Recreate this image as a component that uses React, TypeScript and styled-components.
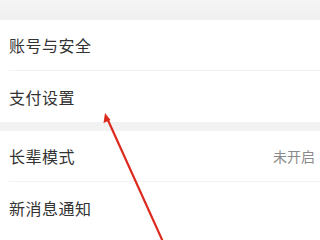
import styled, { createGlobalStyle } from "styled-components";

const GlobalStyle = createGlobalStyle`
  html, body {
    margin: 0;
    padding: 0;
    background: #f2f2f2;
  }
  body {
    font-family: "Noto Sans CJK SC", "Noto Sans", sans-serif;
  }
`;

interface Item {
  label: string;
  value?: string;
}

const groups: Item[][] = [
  [{ label: "账号与安全" }, { label: "支付设置" }],
  [{ label: "长辈模式", value: "未开启" }, { label: "新消息通知" }],
];

export default function App() {
  return (
    <Screen>
      <GlobalStyle />
      <TopBand />
      {groups.map((group, gi) => (
        <Group key={gi} $first={gi === 0} $open={gi === groups.length - 1}>
          {group.map((item) => (
            <Row key={item.label}>
              <Label>{item.label}</Label>
              {item.value && <Value>{item.value}</Value>}
            </Row>
          ))}
        </Group>
      ))}
      <Arrow viewBox="0 0 320 240" width="320" height="240">
        <line x1="164" y1="244" x2="107" y2="118" stroke="#dc2a1e" strokeWidth="2.2" strokeLinecap="round" />
        <polygon points="105,113 103.5,123 110.5,120" fill="#dc2a1e" />
      </Arrow>
    </Screen>
  );
}

const Screen = styled.div`
  position: relative;
  width: 320px;
  height: 240px;
  overflow: hidden;
  background: #f2f2f2;
`;

const TopBand = styled.div`
  height: 20px;
  background: linear-gradient(#f4f4f4, #f0f0f0);
`;

// the last group runs on below the window, so it stays white to the bottom
const Group = styled.div<{ $first: boolean; $open: boolean }>`
  background: #ffffff;
  margin-top: ${(p) => (p.$first ? "0" : "9px")};
  padding-bottom: ${(p) => (p.$open ? "40px" : "0")};
  display: flex;
  flex-direction: column;
`;

const Row = styled.div`
  height: 51px;
  box-sizing: border-box;
  margin-left: 9px;
  padding-right: 5px;
  display: flex;
  align-items: center;
  justify-content: space-between;
  border-bottom: 1px solid #f2f2f2;
  &:last-child {
    border-bottom: none;
  }
`;

const Label = styled.span`
  font-size: 16px;
  color: #333333;
  letter-spacing: 0.5px;
`;

const Value = styled.span`
  font-size: 14px;
  color: #8a8a8a;
`;

const Arrow = styled.svg`
  position: absolute;
  left: 0;
  top: 0;
  pointer-events: none;
`;
